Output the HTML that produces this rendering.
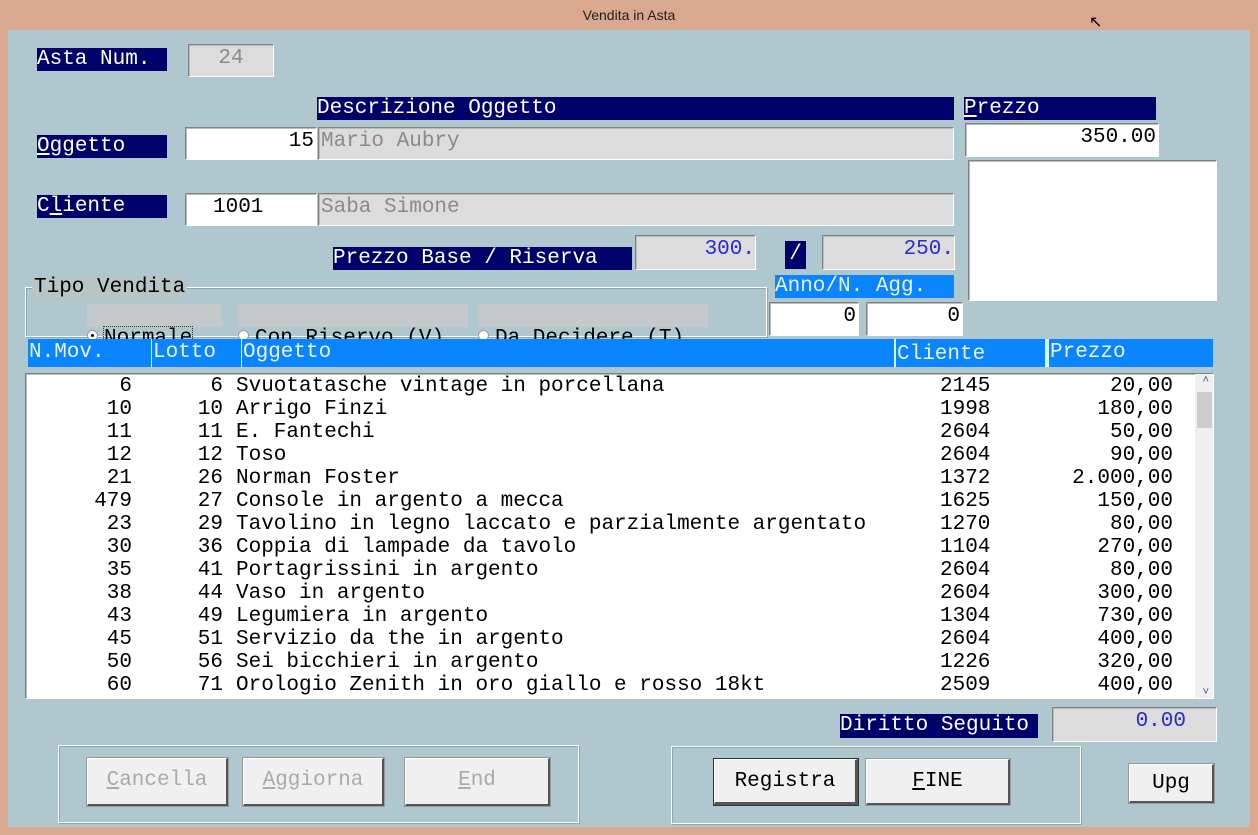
<!DOCTYPE html>
<html><head><meta charset="utf-8"><style>
*{margin:0;padding:0;box-sizing:border-box}
body{width:1258px;height:835px;background:#d9a88e;position:relative;overflow:hidden;font-family:"Liberation Mono","Courier New",monospace;font-size:21px}
.a{position:absolute;white-space:pre;line-height:23px}
.t{position:absolute;left:0;top:0;width:1258px;height:30px;text-align:center;font:14px "Liberation Sans",sans-serif;line-height:30px;color:#222}
.c{position:absolute;left:8px;top:30px;width:1242px;height:797px;background:#afc8cf}
.nv{background:#00006b;color:#fff}
.bl{background:#0a84ff;color:#e8f4ff}
.in{position:absolute;border:1px solid #fff;border-top-color:#808080;border-left-color:#808080;box-shadow:inset 1px 1px 0 #bbb;line-height:28px;padding:0 2px}
.w{background:#fff;color:#000}
.g{background:#dcdcdc;color:#8a8a8a}
.btn{position:absolute;background:#f0f0f0;border:1px solid #fff;border-right:2px solid #555;border-bottom:2px solid #555;outline:1px solid #999;text-align:center;line-height:44px}
.dis{color:#aaa}
.grp{position:absolute;border:1px solid #fff;box-shadow:inset 1px 1px 0 #8aa,1px 1px 0 #8aa}
.r{text-align:right}
u{text-decoration:underline}
.row{position:absolute;left:0;height:23px;width:1170px}
</style></head><body>
<div class="t">Vendita in Asta</div>
<div class="a" style="left:1089px;top:12px;font:16px sans-serif">&#x2196;</div>
<div class="c"></div>

<div class="a nv" style="left:37px;top:48px;width:130px;height:23px">Asta Num.</div>
<div class="in g" style="left:188px;top:44px;width:86px;height:33px;text-align:center">24</div>

<div class="a nv" style="left:317px;top:97px;width:637px;height:23px">Descrizione Oggetto</div>
<div class="a nv" style="left:964px;top:97px;width:192px;height:23px"><u>P</u>rezzo</div>

<div class="a nv" style="left:37px;top:135px;width:130px;height:23px"><u>O</u>ggetto</div>
<div class="in w r" style="left:185px;top:127px;width:132px;height:33px">15</div>
<div class="in g" style="left:318px;top:127px;width:636px;height:33px">Mario Aubry</div>
<div class="in w r" style="left:965px;top:123px;width:194px;height:34px">350.00</div>
<div class="in w" style="left:968px;top:160px;width:249px;height:141px"></div>

<div class="a nv" style="left:37px;top:195px;width:130px;height:23px">C<u>l</u>iente</div>
<div class="in w" style="left:185px;top:193px;width:132px;height:33px;padding-left:27px">1001</div>
<div class="in g" style="left:318px;top:193px;width:636px;height:33px">Saba Simone</div>

<div class="a nv" style="left:333px;top:247px;width:299px;height:23px">Prezzo Base / Riserva</div>
<div class="in g r" style="left:635px;top:235px;width:121px;height:35px;color:#2a2ad0;padding-right:0">300.</div>
<div class="a nv" style="left:785px;top:241px;width:21px;height:28px;line-height:28px;text-align:center">/</div>
<div class="in g r" style="left:822px;top:235px;width:133px;height:35px;color:#2a2ad0;padding-right:0">250.</div>

<div class="a bl" style="left:775px;top:275px;width:179px;height:23px">Anno/N. Agg.</div>
<div class="in w r" style="left:769px;top:302px;width:90px;height:34px">0</div>
<div class="in w r" style="left:866px;top:302px;width:97px;height:34px">0</div>

<div class="grp" style="left:25px;top:287px;width:742px;height:50px"></div>
<div class="a" style="left:32px;top:276px;background:#c0c0c0;background:#b9c4c6;padding:0 2px">Tipo Vendita</div>
<div class="a" style="left:87px;top:304px;width:135px;height:23px;background:#c4c8ca">
<span style="display:inline-block;width:11px;height:11px;border-radius:50%;background:#fff;border:1px solid #999;position:relative;top:-2px;margin-right:6px;vertical-align:middle;box-shadow:inset 0 0 0 3px #fff;background-image:radial-gradient(circle,#000 2px,#fff 2.5px)"></span><span style="outline:1px dotted #333"><u>N</u>ormale</span></div>
<div class="a" style="left:238px;top:304px;width:230px;height:23px;background:#c4c8ca">
<span style="display:inline-block;width:11px;height:11px;border-radius:50%;background:#fff;border:1px solid #999;position:relative;top:-2px;margin-right:6px;vertical-align:middle"></span>Con Riservo (<u>V</u>)</div>
<div class="a" style="left:478px;top:304px;width:230px;height:23px;background:#c4c8ca">
<span style="display:inline-block;width:11px;height:11px;border-radius:50%;background:#fff;border:1px solid #999;position:relative;top:-2px;margin-right:6px;vertical-align:middle"></span>Da Decidere (<u>T</u>)</div>

<div class="a bl" style="left:28px;top:339px;width:1185px;height:28px"></div>
<div class="a" style="left:151px;top:339px;width:1px;height:28px;background:#cfe"></div>
<div class="a" style="left:241px;top:339px;width:1px;height:28px;background:#cfe"></div>
<div class="a" style="left:894px;top:339px;width:2px;height:28px;background:#cfe"></div>
<div class="a" style="left:1045px;top:339px;width:4px;height:28px;background:#cfe"></div>
<div class="a" style="left:29px;top:341px;color:#e8f4ff">N.Mov.</div>
<div class="a" style="left:153px;top:341px;color:#e8f4ff">Lotto</div>
<div class="a" style="left:243px;top:341px;color:#e8f4ff">Oggetto</div>
<div class="a" style="left:897px;top:343px;color:#e8f4ff">Cliente</div>
<div class="a" style="left:1050px;top:341px;color:#e8f4ff">Prezzo</div>

<div class="in w" style="left:25px;top:373px;width:1189px;height:326px;padding:0;overflow:hidden">
<div style="position:absolute;right:0;top:0;width:18px;height:324px;background:#f0f0f0"></div>
<div style="position:absolute;right:1px;top:18px;width:15px;height:36px;background:#cdcdcd"></div>
<div style="position:absolute;right:4px;top:0;font:11px 'Liberation Sans',sans-serif;color:#555">&#x2c4;</div>
<div style="position:absolute;right:4px;bottom:0;font:11px 'Liberation Sans',sans-serif;color:#555">&#x2c5;</div>
<div id="rows"></div>
</div>

<div class="a nv" style="left:840px;top:714px;width:198px;height:24px">Diritto Seguito</div>
<div class="in g r" style="left:1052px;top:707px;width:165px;height:35px;color:#2a2ad0;padding-right:30px">0.00</div>

<div class="grp" style="left:58px;top:745px;width:521px;height:78px"></div>
<div class="btn dis" style="left:87px;top:758px;width:141px;height:48px"><u>C</u>ancella</div>
<div class="btn dis" style="left:243px;top:758px;width:141px;height:48px"><u>A</u>ggiorna</div>
<div class="btn dis" style="left:405px;top:758px;width:145px;height:48px"><u>E</u>nd</div>

<div class="grp" style="left:671px;top:746px;width:410px;height:78px"></div>
<div class="btn" style="left:714px;top:759px;width:144px;height:46px;border-right-width:3px;border-bottom-width:3px;outline-color:#333">Registra</div>
<div class="btn" style="left:866px;top:759px;width:144px;height:46px"><u>F</u>INE</div>
<div class="btn" style="left:1129px;top:764px;width:85px;height:39px;line-height:38px">Upg</div>

<script>
var d=[["6","6","Svuotatasche vintage in porcellana","2145","20,00"],["10","10","Arrigo Finzi","1998","180,00"],["11","11","E. Fantechi","2604","50,00"],["12","12","Toso","2604","90,00"],["21","26","Norman Foster","1372","2.000,00"],["479","27","Console in argento a mecca","1625","150,00"],["23","29","Tavolino in legno laccato e parzialmente argentato","1270","80,00"],["30","36","Coppia di lampade da tavolo","1104","270,00"],["35","41","Portagrissini in argento","2604","80,00"],["38","44","Vaso in argento","2604","300,00"],["43","49","Legumiera in argento","1304","730,00"],["45","51","Servizio da the in argento","2604","400,00"],["50","56","Sei bicchieri in argento","1226","320,00"],["60","71","Orologio Zenith in oro giallo e rosso 18kt","2509","400,00"]];
var h="";d.forEach(function(r,i){var y=1+i*23;
h+='<div class="a r" style="left:0;width:106px;top:'+y+'px">'+r[0]+'</div>'+
'<div class="a r" style="left:100px;width:97px;top:'+y+'px">'+r[1]+'</div>'+
'<div class="a" style="left:210px;top:'+y+'px">'+r[2]+'</div>'+
'<div class="a" style="left:914px;top:'+y+'px">'+r[3]+'</div>'+
'<div class="a r" style="left:1000px;width:147px;top:'+y+'px">'+r[4]+'</div>';});
document.getElementById("rows").innerHTML=h;
</script>
</body></html>
